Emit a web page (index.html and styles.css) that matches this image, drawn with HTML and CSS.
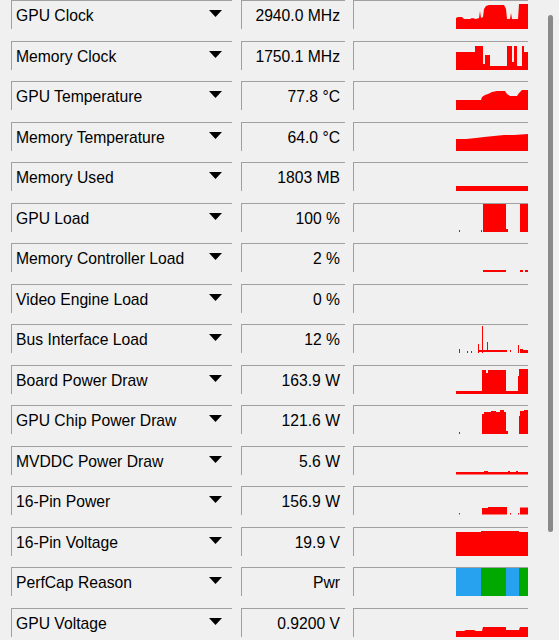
FILE: index.html
```html
<!DOCTYPE html>
<html>
<head>
<meta charset="utf-8">
<title>Sensors</title>
<link rel="stylesheet" href="styles.css">
</head>
<body>
<div class="page">
  <div class="list">
    <div class="row">
      <div class="name"><span class="label">GPU Clock</span><svg class="arrow" viewBox="0 0 13 7"><polygon points="0,0 13,0 6.5,7"/></svg></div>
      <div class="value">2940.0 MHz</div>
      <div class="graph"><svg viewBox="0 0 174 28"><polygon class="red" points="102,28 102,17 104,16 108,16 110,18 116,18 118,17 122,18 125,17 126,10 127,17 129,16 130,8 132,5 135,4 150,4 152,8 153,18 156,18 157,12 158,18 164,18 165,3 174,3 174,28"/></svg></div>
    </div>
    <div class="row">
      <div class="name"><span class="label">Memory Clock</span><svg class="arrow" viewBox="0 0 13 7"><polygon points="0,0 13,0 6.5,7"/></svg></div>
      <div class="value">1750.1 MHz</div>
      <div class="graph"><svg viewBox="0 0 174 28"><polygon class="red" points="102,28 102,10 121,10 121,4 129,4 129,22 131,22 131,13 136,13 136,24 153,24 153,4 158,4 158,20 160,20 160,4 163,4 163,24 168,24 168,4 170,4 170,10 174,10 174,28"/></svg></div>
    </div>
    <div class="row">
      <div class="name"><span class="label">GPU Temperature</span><svg class="arrow" viewBox="0 0 13 7"><polygon points="0,0 13,0 6.5,7"/></svg></div>
      <div class="value">77.8 °C</div>
      <div class="graph"><svg viewBox="0 0 174 28"><polygon class="red" points="102,28 102,18 127,18 128,15 131,13 134,12 138,10 143,9 151,9 153,12 156,14 163,14 165,11 168,8 174,8 174,28"/></svg></div>
    </div>
    <div class="row">
      <div class="name"><span class="label">Memory Temperature</span><svg class="arrow" viewBox="0 0 13 7"><polygon points="0,0 13,0 6.5,7"/></svg></div>
      <div class="value">64.0 °C</div>
      <div class="graph"><svg viewBox="0 0 174 28"><polygon class="red" points="102,28 102,16 112,16 122,15 130,14 140,13 150,12 160,12 174,11 174,28"/></svg></div>
    </div>
    <div class="row">
      <div class="name"><span class="label">Memory Used</span><svg class="arrow" viewBox="0 0 13 7"><polygon points="0,0 13,0 6.5,7"/></svg></div>
      <div class="value">1803 MB</div>
      <div class="graph"><svg viewBox="0 0 174 28"><rect class="red" x="102" y="23" width="72" height="5"/></svg></div>
    </div>
    <div class="row">
      <div class="name"><span class="label">GPU Load</span><svg class="arrow" viewBox="0 0 13 7"><polygon points="0,0 13,0 6.5,7"/></svg></div>
      <div class="value">100 %</div>
      <div class="graph"><svg viewBox="0 0 174 28"><rect class="red" x="105" y="26" width="1" height="2"/><rect class="red" x="127" y="26" width="1" height="2"/><rect class="red" x="129" y="0" width="23" height="28"/><rect class="red" x="152" y="25" width="2" height="3"/><rect class="red" x="166" y="0" width="8" height="28"/></svg></div>
    </div>
    <div class="row">
      <div class="name"><span class="label">Memory Controller Load</span><svg class="arrow" viewBox="0 0 13 7"><polygon points="0,0 13,0 6.5,7"/></svg></div>
      <div class="value">2 %</div>
      <div class="graph"><svg viewBox="0 0 174 28"><rect class="red" x="129" y="26" width="23" height="2"/><rect class="red" x="166" y="26" width="3" height="2"/><rect class="red" x="171" y="26" width="3" height="2"/></svg></div>
    </div>
    <div class="row">
      <div class="name"><span class="label">Video Engine Load</span><svg class="arrow" viewBox="0 0 13 7"><polygon points="0,0 13,0 6.5,7"/></svg></div>
      <div class="value">0 %</div>
      <div class="graph"><svg viewBox="0 0 174 28"></svg></div>
    </div>
    <div class="row">
      <div class="name"><span class="label">Bus Interface Load</span><svg class="arrow" viewBox="0 0 13 7"><polygon points="0,0 13,0 6.5,7"/></svg></div>
      <div class="value">12 %</div>
      <div class="graph"><svg viewBox="0 0 174 28"><rect class="red" x="105" y="24" width="1" height="4"/><rect class="red" x="113" y="26" width="1" height="2"/><rect class="red" x="117" y="26" width="1" height="2"/><rect class="red" x="124" y="19" width="1" height="9"/><rect class="red" x="125" y="25" width="28" height="2"/><rect class="red" x="128" y="1" width="1" height="27"/><rect class="red" x="133" y="17" width="1" height="10"/><rect class="red" x="156" y="25" width="1" height="2"/><rect class="red" x="164" y="20" width="1" height="8"/><polygon class="red" points="166,28 166,24 169,24 169,25 174,25 174,28"/></svg></div>
    </div>
    <div class="row">
      <div class="name"><span class="label">Board Power Draw</span><svg class="arrow" viewBox="0 0 13 7"><polygon points="0,0 13,0 6.5,7"/></svg></div>
      <div class="value">163.9 W</div>
      <div class="graph"><svg viewBox="0 0 174 28"><polygon class="red" points="102,28 102,25 128,25 128,4 132,4 132,7 134,7 134,4 152,4 152,25 164,25 164,10 165,10 165,3 174,3 174,28"/></svg></div>
    </div>
    <div class="row">
      <div class="name"><span class="label">GPU Chip Power Draw</span><svg class="arrow" viewBox="0 0 13 7"><polygon points="0,0 13,0 6.5,7"/></svg></div>
      <div class="value">121.6 W</div>
      <div class="graph"><svg viewBox="0 0 174 28"><rect class="red" x="105" y="26" width="1" height="2"/><polygon class="red" points="128,28 128,8 130,8 130,6 137,6 137,5 142,5 142,6 146,6 146,4 150,4 150,6 152,6 152,28"/><rect class="red" x="152" y="25" width="2" height="3"/><rect class="red" x="165" y="10" width="1" height="18"/><polygon class="red" points="166,28 166,5 170,5 170,4 174,4 174,28"/></svg></div>
    </div>
    <div class="row">
      <div class="name"><span class="label">MVDDC Power Draw</span><svg class="arrow" viewBox="0 0 13 7"><polygon points="0,0 13,0 6.5,7"/></svg></div>
      <div class="value">5.6 W</div>
      <div class="graph"><svg viewBox="0 0 174 28"><rect class="red" x="102" y="25" width="72" height="2.5"/><rect class="red" x="130" y="24" width="4" height="1"/><rect class="red" x="154" y="24" width="2" height="1"/><rect class="red" x="162" y="24" width="2" height="1"/></svg></div>
    </div>
    <div class="row">
      <div class="name"><span class="label">16-Pin Power</span><svg class="arrow" viewBox="0 0 13 7"><polygon points="0,0 13,0 6.5,7"/></svg></div>
      <div class="value">156.9 W</div>
      <div class="graph"><svg viewBox="0 0 174 28"><rect class="red" x="105" y="26" width="1" height="1.5"/><polygon class="red" points="128,27.5 128,21 134,21 134,20 153,20 153,27.5"/><rect class="red" x="156" y="26" width="1" height="1.5"/><rect class="red" x="164" y="26" width="1" height="1.5"/><rect class="red" x="166" y="20.5" width="8" height="7"/></svg></div>
    </div>
    <div class="row">
      <div class="name"><span class="label">16-Pin Voltage</span><svg class="arrow" viewBox="0 0 13 7"><polygon points="0,0 13,0 6.5,7"/></svg></div>
      <div class="value">19.9 V</div>
      <div class="graph"><svg viewBox="0 0 174 28"><polygon class="red" points="102,28 102,4 127,4 127,3 152,3 152,3 165,3 165,4 174,4 174,28"/></svg></div>
    </div>
    <div class="row">
      <div class="name"><span class="label">PerfCap Reason</span><svg class="arrow" viewBox="0 0 13 7"><polygon points="0,0 13,0 6.5,7"/></svg></div>
      <div class="value">Pwr</div>
      <div class="graph"><svg viewBox="0 0 174 28"><rect class="blue" x="102" y="0" width="25" height="28"/><rect class="green" x="127" y="0" width="25" height="28"/><rect class="blue" x="152" y="0" width="13" height="28"/><rect class="green" x="165" y="0" width="9" height="28"/></svg></div>
    </div>
    <div class="row">
      <div class="name"><span class="label">GPU Voltage</span><svg class="arrow" viewBox="0 0 13 7"><polygon points="0,0 13,0 6.5,7"/></svg></div>
      <div class="value">0.9200 V</div>
      <div class="graph"><svg viewBox="0 0 174 28"><polygon class="red" points="102,28 102,22 110,22 112,21 120,21 122,22 128,22 129,18 152,18 152,21 165,21 166,18 174,18 174,28"/></svg></div>
    </div>
  </div>
  <div class="scroll"><div class="thumb"></div></div>
</div>
</body>
</html>
```

FILE: styles.css
```css
html, body {
  margin: 0;
  padding: 0;
  height: 640px;
  overflow: hidden;
  background: #f0f0f0;
}

body {
  font-family: "Liberation Sans", Arial, sans-serif;
  font-size: 15.7px;
  color: #000;
}

.page {
  display: flex;
  align-items: flex-start;
}

.list {
  display: flex;
  flex-direction: column;
  gap: 11.5px;
  padding-left: 11px;
}

.row {
  display: flex;
  height: 29px;
}

.name, .value, .graph {
  box-sizing: border-box;
  height: 29px;
  border-top: 1px solid #a0a0a0;
  border-left: 1px solid #a0a0a0;
  background: #f0f0f0;
}

.name {
  width: 221px;
  display: flex;
  align-items: flex-start;
  padding-left: 4px;
}

.label {
  padding-top: 6px;
  line-height: 18px;
  white-space: nowrap;
}

.arrow {
  width: 13px;
  height: 7px;
  margin-left: auto;
  margin-right: 10px;
  margin-top: 9px;
  fill: #000;
}

.value {
  width: 104px;
  margin-left: 9px;
  padding-top: 6px;
  padding-right: 5px;
  line-height: 18px;
  text-align: right;
  white-space: nowrap;
}

.graph {
  width: 175px;
  margin-left: 8px;
}

.graph svg {
  display: block;
  width: 174px;
  height: 28px;
}

.red { fill: #ff0000; }
.blue { fill: #27a2ef; }
.green { fill: #00a800; }

.scroll {
  flex: 1;
  height: 640px;
  padding-top: 15px;
  box-sizing: border-box;
}

.thumb {
  width: 5px;
  height: 517px;
  margin-left: 20px;
  border-radius: 3px;
  background: #8a8a8a;
}
```
